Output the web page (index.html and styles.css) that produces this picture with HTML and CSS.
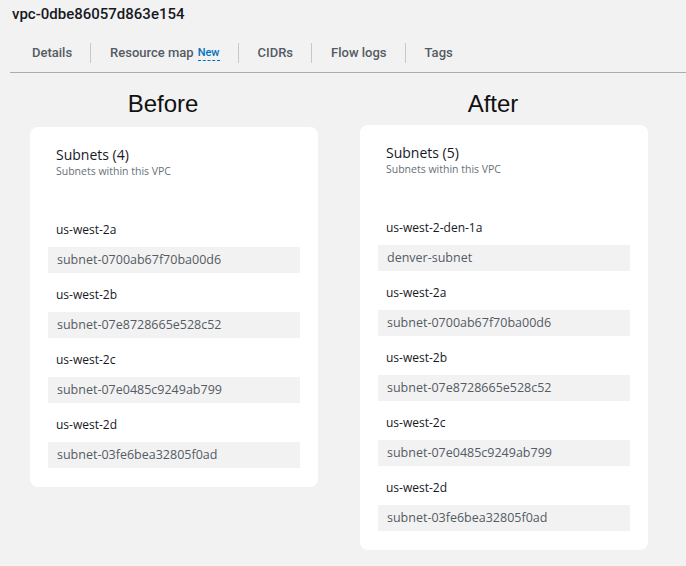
FILE: index.html
```html
<!DOCTYPE html>
<html>
<head>
<meta charset="utf-8">
<link rel="stylesheet" href="styles.css">
</head>
<body>
<div class="page">
  <h1 class="vpc-title">vpc-0dbe86057d863e154</h1>
  <nav class="tabs">
    <span class="tab">Details</span>
    <span class="tab">Resource map <span class="badge-new">New</span></span>
    <span class="tab">CIDRs</span>
    <span class="tab">Flow logs</span>
    <span class="tab">Tags</span>
  </nav>
  <div class="compare">
    <section class="col col-before">
      <h2 class="col-heading">Before</h2>
      <div class="card">
        <div class="card-title">Subnets (4)</div>
        <div class="card-sub">Subnets within this VPC</div>
        <div class="subnets">
          <div class="subnet">
            <div class="az">us-west-2a</div>
            <div class="sid">subnet-0700ab67f70ba00d6</div>
          </div>
          <div class="subnet">
            <div class="az">us-west-2b</div>
            <div class="sid">subnet-07e8728665e528c52</div>
          </div>
          <div class="subnet">
            <div class="az">us-west-2c</div>
            <div class="sid">subnet-07e0485c9249ab799</div>
          </div>
          <div class="subnet">
            <div class="az">us-west-2d</div>
            <div class="sid">subnet-03fe6bea32805f0ad</div>
          </div>
        </div>
      </div>
    </section>
    <section class="col col-after">
      <h2 class="col-heading">After</h2>
      <div class="card">
        <div class="card-title">Subnets (5)</div>
        <div class="card-sub">Subnets within this VPC</div>
        <div class="subnets">
          <div class="subnet">
            <div class="az">us-west-2-den-1a</div>
            <div class="sid">denver-subnet</div>
          </div>
          <div class="subnet">
            <div class="az">us-west-2a</div>
            <div class="sid">subnet-0700ab67f70ba00d6</div>
          </div>
          <div class="subnet">
            <div class="az">us-west-2b</div>
            <div class="sid">subnet-07e8728665e528c52</div>
          </div>
          <div class="subnet">
            <div class="az">us-west-2c</div>
            <div class="sid">subnet-07e0485c9249ab799</div>
          </div>
          <div class="subnet">
            <div class="az">us-west-2d</div>
            <div class="sid">subnet-03fe6bea32805f0ad</div>
          </div>
        </div>
      </div>
    </section>
  </div>
</div>
</body>
</html>
```

FILE: styles.css
```css
html, body {
  margin: 0;
  padding: 0;
  background: #f2f2f2;
}

.page {
  width: 686px;
  height: 566px;
  overflow: hidden;
  font-family: "Open Sans", sans-serif;
  color: #16191f;
}

.vpc-title {
  margin: 0;
  padding: 5px 0 0 12px;
  height: 21px;
  font-family: Roboto, sans-serif;
  font-weight: 500;
  font-size: 15px;
  line-height: 18px;
  color: #16191f;
}

.tabs {
  display: flex;
  align-items: center;
  margin: 0 0 0 10px;
  padding: 17px 0 9px 2px;
  border-bottom: 1px solid #a9acb0;
  font-family: Roboto, sans-serif;
  font-weight: 500;
  font-size: 13px;
  color: #545b64;
}

.tab {
  display: flex;
  align-items: center;
  padding: 0 18px 0 19px;
  height: 20px;
  line-height: 20px;
  border-left: 1px solid #c6c8cb;
}

.tab:first-child {
  border-left: none;
  padding-left: 20px;
}

.badge-new {
  margin-left: 4px;
  font-size: 11px;
  color: #0073bb;
  line-height: 14px;
  border-bottom: 1px dashed #0073bb;
}

.compare {
  display: grid;
  grid-template-columns: 288px 288px;
  column-gap: 42px;
  padding: 0 0 0 30px;
}

.col-heading {
  margin: 0;
  padding: 16px 22px 0 0;
  height: 36px;
  font-family: "Liberation Sans", Arial, sans-serif;
  font-weight: 400;
  font-size: 24px;
  line-height: 30px;
  text-align: center;
  color: #111;
}

.col-before .card {
  margin-top: 2px;
}

.card {
  background: #fff;
  border-radius: 8px;
  padding: 18px 18px 19px 18px;
}

.card-title {
  padding-left: 8px;
  font-size: 14px;
  line-height: 19px;
  color: #16191f;
}

.card-sub {
  padding-left: 8px;
  font-size: 10.5px;
  line-height: 14px;
  color: #687078;
}

.subnets {
  display: flex;
  flex-direction: column;
  gap: 13px;
  margin-top: 43px;
}

.subnet {
  display: flex;
  flex-direction: column;
  gap: 8px;
}

.az {
  padding-left: 8px;
  font-size: 12px;
  line-height: 18px;
  color: #16191f;
}

.sid {
  height: 26px;
  line-height: 26px;
  padding-left: 9px;
  background: #f2f2f2;
  font-size: 12.5px;
  color: #545b64;
}
```
